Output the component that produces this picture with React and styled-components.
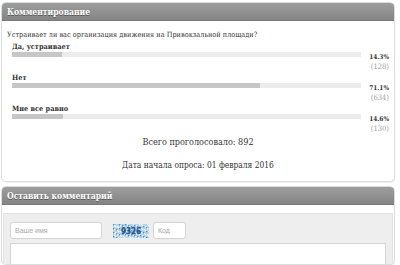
import React from "react";
import styled, { createGlobalStyle } from "styled-components";

const Global = createGlobalStyle`
  html, body { margin: 0; padding: 0; background: #fff; overflow: hidden; }
  body { font-family: "DejaVu Serif Condensed", "DejaVu Serif", Georgia, serif; color: #333; }
`;

const Page = styled.div`
  width: 394px;
  height: 263px;
  overflow: hidden;
  padding: 2px 0 0 1px;
  display: flex;
  flex-direction: column;
  gap: 4px;
`;

const Panel = styled.section`
  flex: ${(p) => (p.$grow ? 1 : "none")};
  border: 1px solid #dcdcdc;
  border-radius: 5px;
  overflow: hidden;
  background: #fff;
  box-shadow: 1px 1px 1px rgba(0, 0, 0, 0.06);
`;

const Header = styled.h2`
  margin: 0;
  height: 17px;
  line-height: 18px;
  padding: 0 5px;
  background: linear-gradient(#9e9e9e, #848484);
  border-bottom: 1px solid #7a7a7a;
  color: #fff;
  font-size: 8.5px;
  font-weight: bold;
  text-shadow: 0 1px 0 #555;
`;

const PollBody = styled.div`
  padding: 8px 5px 9px 5px;
`;

const Question = styled.div`
  font-size: 7.3px;
  line-height: 12px;
`;

const Options = styled.div`
  padding-left: 5px;
`;

const Option = styled.div`
  display: grid;
  grid-template-columns: 349px 1fr;
  grid-template-rows: 11px 9px 11px;
`;

const Label = styled.div`
  grid-column: 1;
  grid-row: 1;
  font-size: 7.3px;
  font-weight: bold;
  line-height: 11px;
`;

const Bar = styled.div`
  grid-column: 1;
  grid-row: 2;
  height: 5px;
  background: #ececec;
`;

const Fill = styled.div`
  height: 100%;
  background: #c6c6c6;
`;

const Pct = styled.div`
  grid-column: 2;
  grid-row: 2;
  text-align: right;
  font-size: 6.5px;
  font-weight: bold;
  line-height: 9px;
  padding-top: 1px;
`;

const Count = styled.div`
  grid-column: 2;
  grid-row: 3;
  text-align: right;
  font-size: 7.5px;
  color: #a0a0a0;
  line-height: 11px;
`;

const Summary = styled.div`
  text-align: center;
  font-size: ${(p) => p.$size}px;
  line-height: 14px;
  margin-top: ${(p) => p.$gap || 0}px;
`;

const FormBody = styled.div`
  padding: 8px 1px 0 1px;
`;

const FormBox = styled.div`
  background: #eeeeee;
  border: 1px solid #e2e2e2;
  padding: 8px 6px 40px 6px;
  display: flex;
  flex-direction: column;
  gap: 4px;
`;

const Row = styled.div`
  display: flex;
  align-items: center;
`;

const Input = styled.input`
  box-sizing: border-box;
  width: ${(p) => p.$w}px;
  height: 17px;
  border: 1px solid #d4d4d4;
  border-radius: 3px;
  background: #fff;
  padding: 0 4px;
  font-family: "Liberation Sans", Arial, sans-serif;
  font-size: 7px;
  margin-right: ${(p) => p.$mr || 0}px;
  &::placeholder { color: #a8a8a8; }
`;

const Captcha = styled.svg`
  display: block;
  width: 36px;
  height: 14px;
  margin-right: 4px;
`;

const TextArea = styled.textarea`
  box-sizing: border-box;
  width: 376px;
  height: 60px;
  border: 1px solid #d4d4d4;
  background: #fff;
  resize: none;
`;

const options = [
  { label: "Да, устраивает", pct: 14.3, count: 128 },
  { label: "Нет", pct: 71.1, count: 634 },
  { label: "Мне все равно", pct: 14.6, count: 130 },
];

function CaptchaImage() {
  const dots = [];
  for (let i = 0; i < 110; i++) {
    const x = (i * 37) % 36;
    const y = (i * 53) % 14;
    dots.push(
      <rect key={i} x={x} y={y} width="1.3" height="1.3" fill={i % 3 ? "#ffffff" : "#4f8cc4"} />
    );
  }
  return (
    <Captcha viewBox="0 0 36 14">
      <rect width="36" height="14" fill="#b5d2ea" />
      {dots}
      <text x="18" y="10.3" textAnchor="middle" fontFamily="DejaVu Sans Condensed, DejaVu Sans, sans-serif" fontSize="8" fontWeight="bold" fill="#1f5f99" stroke="#0d3a66" strokeWidth="0.25">9326</text>
    </Captcha>
  );
}

export default function App() {
  return (
    <>
      <Global />
      <Page>
        <Panel>
          <Header>Комментирование</Header>
          <PollBody>
            <Question>Устраивает ли вас организация движения на Привокзальной площади?</Question>
            <Options>
              {options.map((o) => (
                <Option key={o.label}>
                  <Label>{o.label}</Label>
                  <Bar>
                    <Fill style={{ width: `${o.pct}%` }} />
                  </Bar>
                  <Pct>{o.pct}%</Pct>
                  <Count>({o.count})</Count>
                </Option>
              ))}
            </Options>
            <Summary $size={9} $gap={1}>Всего проголосовало: 892</Summary>
            <Summary $size={8.4} $gap={9}>Дата начала опроса: 01 февраля 2016</Summary>
          </PollBody>
        </Panel>
        <Panel $grow>
          <Header>Оставить комментарий</Header>
          <FormBody>
            <FormBox>
              <Row>
                <Input placeholder="Ваше имя" $w={92} $mr={11} />
                <CaptchaImage />
                <Input placeholder="Код" $w={33} />
              </Row>
              <TextArea />
            </FormBox>
          </FormBody>
        </Panel>
      </Page>
    </>
  );
}
